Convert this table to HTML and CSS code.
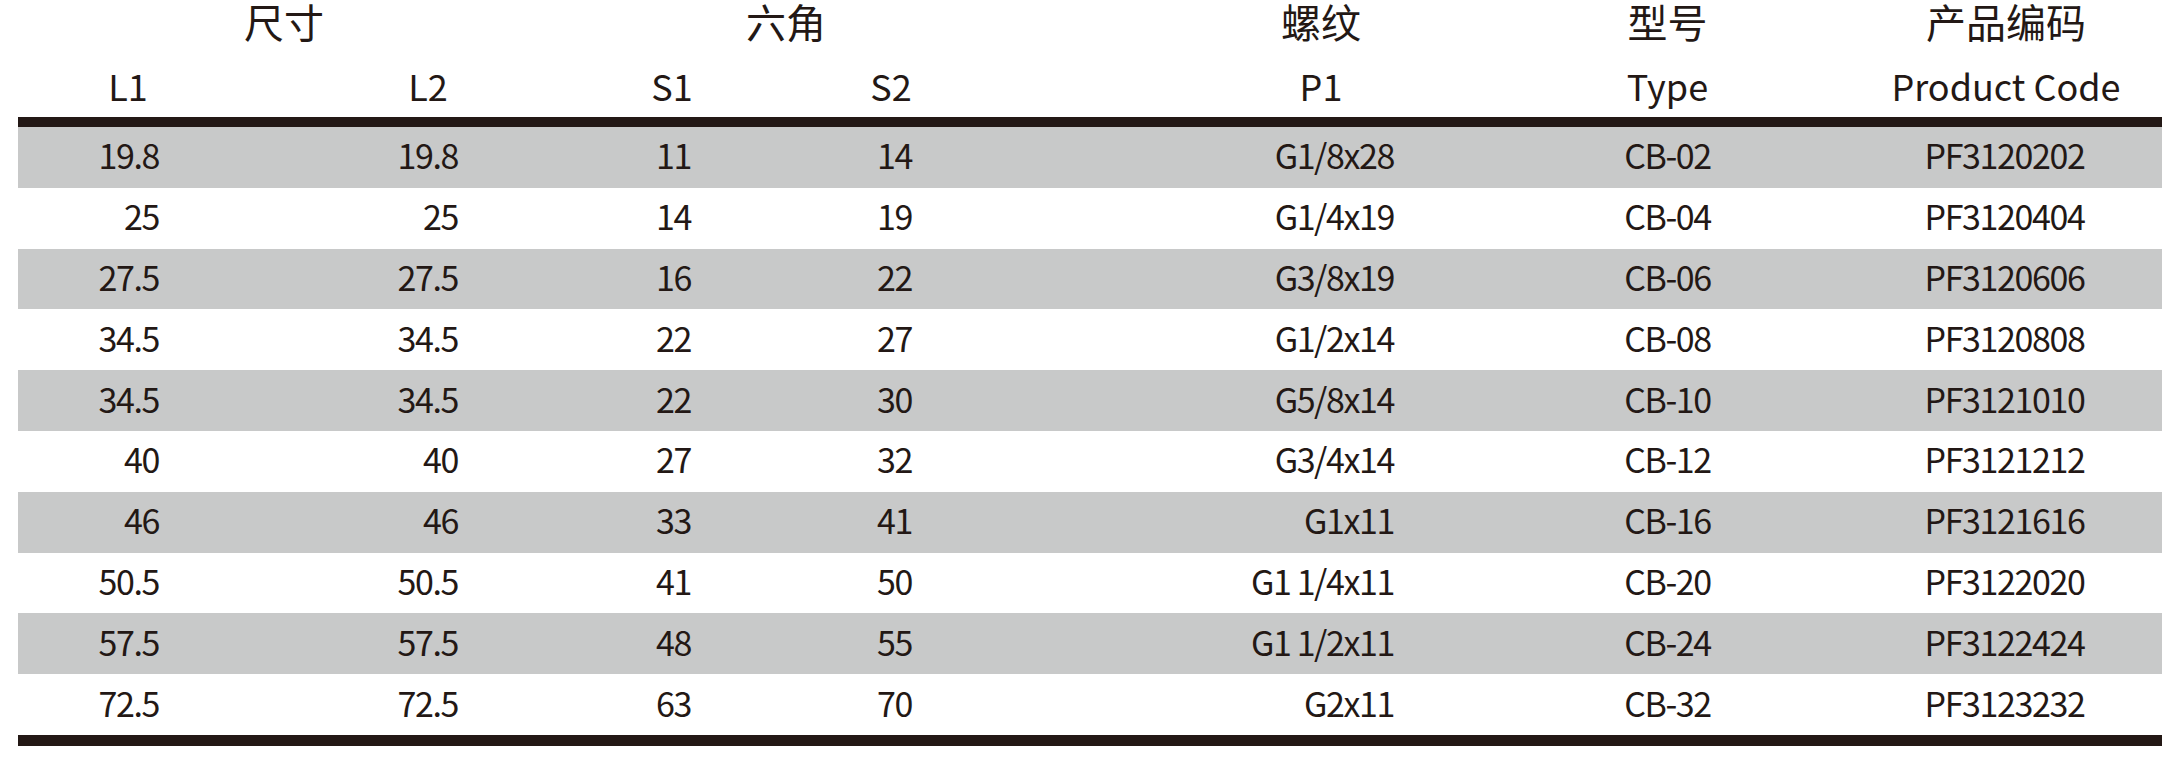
FILE: index.html
```html
<!DOCTYPE html>
<html lang="zh">
<head>
<meta charset="utf-8">
<title>规格表</title>
<link rel="stylesheet" href="styles.css">
</head>
<body>
<div class="spec">
  <div class="head-cn">
    <div class="g12">尺寸</div>
    <div class="g34">六角</div>
    <div class="c5">螺纹</div>
    <div class="c6">型号</div>
    <div class="c7">产品编码</div>
  </div>
  <div class="head-en">
    <div class="c1">L1</div>
    <div class="c2">L2</div>
    <div class="c3">S1</div>
    <div class="c4">S2</div>
    <div class="c5">P1</div>
    <div class="c6">Type</div>
    <div class="c7">Product Code</div>
  </div>
  <div class="body">
    <div class="row alt"><div class="d1">19.8</div><div class="d2">19.8</div><div class="d3">11</div><div class="d4">14</div><div class="d5">G1/8x28</div><div class="d6">CB-02</div><div class="d7">PF3120202</div></div>
    <div class="row"><div class="d1">25</div><div class="d2">25</div><div class="d3">14</div><div class="d4">19</div><div class="d5">G1/4x19</div><div class="d6">CB-04</div><div class="d7">PF3120404</div></div>
    <div class="row alt"><div class="d1">27.5</div><div class="d2">27.5</div><div class="d3">16</div><div class="d4">22</div><div class="d5">G3/8x19</div><div class="d6">CB-06</div><div class="d7">PF3120606</div></div>
    <div class="row"><div class="d1">34.5</div><div class="d2">34.5</div><div class="d3">22</div><div class="d4">27</div><div class="d5">G1/2x14</div><div class="d6">CB-08</div><div class="d7">PF3120808</div></div>
    <div class="row alt"><div class="d1">34.5</div><div class="d2">34.5</div><div class="d3">22</div><div class="d4">30</div><div class="d5">G5/8x14</div><div class="d6">CB-10</div><div class="d7">PF3121010</div></div>
    <div class="row"><div class="d1">40</div><div class="d2">40</div><div class="d3">27</div><div class="d4">32</div><div class="d5">G3/4x14</div><div class="d6">CB-12</div><div class="d7">PF3121212</div></div>
    <div class="row alt"><div class="d1">46</div><div class="d2">46</div><div class="d3">33</div><div class="d4">41</div><div class="d5">G1x11</div><div class="d6">CB-16</div><div class="d7">PF3121616</div></div>
    <div class="row"><div class="d1">50.5</div><div class="d2">50.5</div><div class="d3">41</div><div class="d4">50</div><div class="d5">G1 1/4x11</div><div class="d6">CB-20</div><div class="d7">PF3122020</div></div>
    <div class="row alt"><div class="d1">57.5</div><div class="d2">57.5</div><div class="d3">48</div><div class="d4">55</div><div class="d5">G1 1/2x11</div><div class="d6">CB-24</div><div class="d7">PF3122424</div></div>
    <div class="row"><div class="d1">72.5</div><div class="d2">72.5</div><div class="d3">63</div><div class="d4">70</div><div class="d5">G2x11</div><div class="d6">CB-32</div><div class="d7">PF3123232</div></div>
  </div>
</div>
</body>
</html>
```

FILE: styles.css
```css
html, body {
  margin: 0;
  padding: 0;
  background: #ffffff;
}

body {
  font-family: "Noto Sans CJK SC", "Noto Sans", sans-serif;
  color: #231815;
}

.spec {
  width: 2144px;
  margin-left: 18px;
}

.head-cn,
.head-en,
.row {
  display: grid;
  grid-template-columns: 260px 272px 232px 324px 388px 343px 325px;
  align-items: center;
}

.head-cn {
  height: 42px;
  padding-bottom: 10px;
  font-size: 40px;
  line-height: 1;
  text-align: center;
}

.head-en {
  height: 65px;
  font-size: 36px;
  line-height: 1;
  text-align: center;
}

.g12 { grid-column: 1 / span 2; }
.g34 { grid-column: 3 / span 2; padding-right: 84px; }

.c1 { padding-right: 40px; }
.c2 { padding-left: 28px; }
.c3 { padding-left: 12px; }
.c4 { padding-right: 106px; }
.c5 { padding-left: 42px; }
.c6 { padding-left: 4px; }
.c7 { padding-left: 13px; }

.body {
  border-top: 10px solid #231815;
  border-bottom: 11px solid #231815;
}

.row {
  height: 56.8px;
  padding-bottom: 4px;
  font-size: 34px;
  line-height: 1;
  letter-spacing: -1.4px;
}

.row.alt {
  background: #c8c9c9;
}

.d1, .d2, .d3, .d4, .d5 { text-align: right; }
.d6, .d7 { text-align: center; }

.d1 { padding-right: 119px; }
.d2 { padding-right: 92px; }
.d3 { padding-right: 91px; }
.d4 { padding-right: 194px; }
.d5 { padding-right: 100px; }
.d6 { padding-left: 4px; }
.d7 { padding-left: 10px; }
```
